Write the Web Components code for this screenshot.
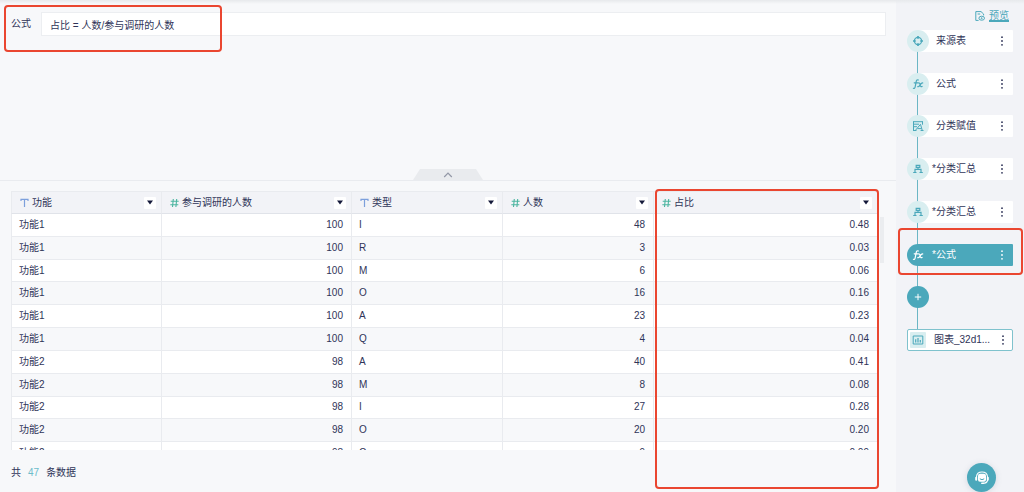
<!DOCTYPE html>
<html lang="zh-CN">
<head>
<meta charset="utf-8">
<meta name="viewport" content="width=device-width, initial-scale=1">
<title>公式</title>
<style>
  :root {
    --ink: #2f3458; --teal: #4ba8bb; --teal-soft: #d9eef0; --line: #e9ebef;
    --pane: #f7f8fa; --rail: #f2f3f7; --mark: #ea4630; --blue: #7c9fdc; --green: #4bb5a0;
  }
  body { margin: 0; color: var(--ink); font: 10px/14px "Liberation Sans", "Noto Sans CJK SC", sans-serif; }
</style>
</head>
<body>
<app-shell>
  <formula-bar slot="editor" label="公式" value="占比 = 人数/参与调研的人数"></formula-bar>
  <data-grid slot="data"></data-grid>
  <flow-rail slot="rail">
    <flow-node icon="source">来源表</flow-node>
    <flow-node icon="fx">公式</flow-node>
    <flow-node icon="assign">分类赋值</flow-node>
    <flow-node icon="tree" changed>分类汇总</flow-node>
    <flow-node icon="tree" changed>分类汇总</flow-node>
    <flow-node icon="fx" changed active>公式</flow-node>
    <flow-add></flow-add>
    <flow-node icon="chart" output>图表_32d1...</flow-node>
  </flow-rail>
</app-shell>

<script>
const define = (name, css, html) => {
  customElements.define(name, class extends HTMLElement {
    connectedCallback() {
      if (this.shadowRoot) return;
      const root = this.attachShadow({ mode: 'open' });
      root.innerHTML = `<style>*{box-sizing:border-box}button{font:inherit;color:inherit;border:0;padding:0;margin:0;background:none;cursor:pointer}svg{display:block}${css}</style>${typeof html === 'function' ? html(this) : html}`;
    }
  });
};

const ICONS = {
  source: '<svg width="12" height="12" viewBox="0 0 12 12" fill="none" stroke="currentColor"><circle cx="6" cy="6" r="3.6" stroke-width="1.2"/><path d="M6 1v2.800M6 8.200v2.800M1 6h2.800M8.200 6h2.800" stroke-width="1.700"/></svg>',
  fx: '<svg width="12" height="12" viewBox="0 0 12 12" fill="none" stroke="currentColor" stroke-linecap="round" stroke-linejoin="round" stroke-width="1.2"><path d="M6.4 2C5.2 1.5 4.5 2.1 4.3 3.2L3.1 9.2C2.9 10.2 2.2 10.7 1.4 10.3M2.2 4.8H5.8M6.2 5C7.4 4.6 7.8 5.4 8.1 6.6C8.5 8.2 8.8 9.2 10.1 8.5M10.7 4.9C9.6 4.8 8.7 6 8 7.1C7.3 8.3 6.7 9 5.7 8.7"/></svg>',
  assign: '<svg width="12" height="12" viewBox="0 0 12 12" fill="none" stroke="currentColor"><path d="M1 1.700h10M1.500 1.700v9M1.500 4.200h5.500M1.500 6.700h3.500M3.200 10.600L8.500 4.300L10.300 10.600M5.500 8.600h4M1 10.500h3.500M8.600 10.500h2.900M10.500 1.700v3"/></svg>',
  tree: '<svg width="12" height="12" viewBox="0 0 12 12" fill="none" stroke="currentColor"><path d="M4.200 2.300h3.600v2H4.200zM6 4.300v2M3 9V6.400h6V9M1.200 9.500h3.300M7.500 9.500h3.300" stroke-width="1.200"/></svg>',
  chart: '<svg width="12" height="12" viewBox="0 0 12 12" fill="none" stroke="currentColor"><path d="M1.2 2h9.6v8H1.2z"/><path d="M3.7 8.5V5.2M6 8.5V4M8.3 8.5V6" stroke-width="1.2"/></svg>'
};

define('mark-frame', `
  :host{display:block;position:absolute;z-index:3;border:2px solid var(--mark);border-radius:4px;pointer-events:none}`, '');

define('app-shell', `
  :host{display:grid;grid-template-columns:minmax(0,1fr) 128px;min-height:100vh;background:var(--pane);position:relative}
  :host::before{content:"";position:absolute;inset:0 0 auto;height:4px;background:linear-gradient(#e7e9ec,#e7e9ec00);z-index:1}
  main{display:grid;grid-template-rows:181px minmax(0,1fr);height:100vh}`, `
  <main><slot name="editor"></slot><slot name="data"></slot></main>
  <slot name="rail"></slot>`);

define('formula-bar', `
  :host{display:block;position:relative;padding:12px 10px 0 11px;border-bottom:1px solid var(--line)}
  .row{display:flex;align-items:center;gap:10px}
  label{flex:none}
  input{flex:1;min-width:0;height:24px;padding:0 8px;border:1px solid #eceef1;background:#fff;font:inherit;color:inherit;outline:0}
  .fold{position:absolute;left:50%;bottom:0;width:70px;height:11px;transform:translateX(-50%);background:#e9ebee;clip-path:polygon(10% 0,90% 0,100% 100%,0 100%);display:grid;place-items:center;color:#9297a6}
  mark-frame{left:4px;top:5px;width:218px;height:47px}`,
  el => `
  <div class="row"><label for="f">${el.getAttribute('label')}</label><input id="f" type="text" value="${el.getAttribute('value')}"></div>
  <button class="fold" aria-label="收起"><svg width="10" height="6" viewBox="0 0 10 6" fill="none" stroke="currentColor" stroke-width="1.2"><path d="M1.2 5L5 1.2L8.8 5"/></svg></button>
  <mark-frame></mark-frame>`);

define('column-head', `
  :host{display:flex;align-items:center;gap:3px}
  .name{flex:1;white-space:nowrap}
  .T{color:var(--blue)} .N{color:var(--green)}
  button{width:12px;height:12px;background:#fff;display:grid;place-items:center;color:#14193a;border-radius:1px}`,
  el => {
    const text = el.getAttribute('kind') === 'T';
    const icon = text
      ? '<svg class="T" width="9" height="10" viewBox="0 0 9 10" fill="none" stroke="currentColor" stroke-width="1.2"><path d="M1 3V1.4h7V3M4.5 1.4V9"/></svg>'
      : '<svg class="N" width="9" height="10" viewBox="0 0 9 10" fill="none" stroke="currentColor" stroke-width="1.1"><path d="M3.3 1L2.5 9M6.7 1L5.9 9M.7 3.3h8M.3 6.7h8"/></svg>';
    return `${icon}<span class="name"><slot></slot></span><button aria-label="筛选"><svg width="6" height="5" viewBox="0 0 6 5"><path d="M0 .5h6L3 4.5z" fill="currentColor"/></svg></button>`;
  });

const COLUMNS = [['T', '功能'], ['N', '参与调研的人数'], ['T', '类型'], ['N', '人数'], ['N', '占比']];
const ROWS = [
  ['功能1', 100, 'I', 48, '0.48'], ['功能1', 100, 'R', 3, '0.03'], ['功能1', 100, 'M', 6, '0.06'],
  ['功能1', 100, 'O', 16, '0.16'], ['功能1', 100, 'A', 23, '0.23'], ['功能1', 100, 'Q', 4, '0.04'],
  ['功能2', 98, 'A', 40, '0.41'], ['功能2', 98, 'M', 8, '0.08'], ['功能2', 98, 'I', 27, '0.28'],
  ['功能2', 98, 'O', 20, '0.20'], ['功能2', 98, 'C', 9, '0.09']
];

define('data-grid', `
  :host{display:flex;flex-direction:column;position:relative;min-height:0;padding:10px 18px 0 11px}
  .view{flex:1;min-height:0;overflow:hidden}
  table{width:100%;height:274px;table-layout:fixed;border-collapse:separate;border-spacing:0;border-right:1px solid var(--line)}
  th,td{padding:0 8px 0 7px;border-left:1px solid var(--line);border-bottom:1px solid var(--line);text-align:left;font-weight:400}
  th{height:23px;background:var(--rail);padding:0 5px 0 8px;border-top:1px solid var(--line);border-bottom-color:#e0e3e9}
  tbody tr:nth-child(odd){background:#fff}
  .num{text-align:right}
  .thumb{position:absolute;right:12px;top:36px;width:4px;height:46px;background:#ebedf0}
  footer{height:42px;display:flex;align-items:center;gap:7px;padding-top:3px}
  b{font-weight:400;color:#6dbccb}
  mark-frame{right:17px;top:8px;bottom:3px;width:224px}`,
  () => `
  <div class="view"><table>
    <colgroup><col style="width:150px"><col style="width:190px"><col style="width:151px"><col style="width:151px"><col></colgroup>
    <thead><tr>${COLUMNS.map(([k, n]) => `<th scope="col"><column-head kind="${k}">${n}</column-head></th>`).join('')}</tr></thead>
    <tbody>${ROWS.map(r => `<tr>${r.map((v, i) => `<td${COLUMNS[i][0] === 'N' ? ' class="num"' : ''}>${v}</td>`).join('')}</tr>`).join('')}</tbody>
  </table></div>
  <div class="thumb"></div>
  <footer><span>共</span><b>47</b><span>条数据</span></footer>
  <mark-frame></mark-frame>`);

define('flow-rail', `
  :host{display:flex;flex-direction:column;position:relative;background:var(--rail);padding:9px 11px 0}
  a{align-self:flex-end;display:flex;align-items:center;gap:4px;color:var(--teal);margin-right:4px;height:14px}
  a span{text-decoration:underline;text-underline-offset:2px}
  .list{display:flex;flex-direction:column;justify-content:space-between;height:321px;margin-top:7px;position:relative}
  .list::before{content:"";position:absolute;left:10px;top:11px;bottom:11px;width:1px;background:#6bb6c5}
  .help{position:absolute;right:28px;bottom:0;width:29px;height:29px;border-radius:50%;background:var(--teal);color:#fff;display:grid;place-items:center;box-shadow:0 1px 6px #5a64782e}`, `
  <a href="#preview"><svg width="10" height="10" viewBox="0 0 10 10" fill="none" stroke="currentColor"><path d="M3.6 9.4H.8V.6H6L8.6 3V4.4M2.6 3h2.6"/><ellipse cx="6.7" cy="7.2" rx="2.8" ry="2"/><circle cx="6.7" cy="7.2" r=".5"/></svg><span>预览</span></a>
  <div class="list"><slot></slot></div>
  <button class="help" aria-label="客服"><svg width="16" height="16" viewBox="0 0 16 16"><path d="M2.500 8V6.800C2.700 3.600 5 2 8 2s5.300 1.600 5.500 4.800V10.500C13 12.300 11.500 13.300 9 13.300" fill="none" stroke="currentColor" stroke-width="1.100"/><rect x="1.200" y="6.700" width="2" height="4" rx="1" fill="currentColor"/><rect x="12.800" y="6.700" width="2" height="4" rx="1" fill="currentColor"/><rect x="4" y="3.800" width="8" height="8" rx="2" fill="currentColor"/><path d="M5.800 8.800Q8 10.600 10.200 8.800" fill="none" stroke="#4ba8bb"/><rect x="7" y="12.500" width="3" height="1.600" rx=".8" fill="currentColor"/></svg></button>`);

define('flow-node', `
  :host{display:flex;align-items:center;position:relative;height:22px}
  .body{flex:1;min-width:0;height:22px;margin-left:11px;padding:0 8px 0 18px;background:#fff;border-radius:1px;display:flex;align-items:center}
  .icon{position:absolute;left:0;top:0;width:22px;height:22px;border-radius:50%;background:var(--teal-soft);color:var(--teal);display:grid;place-items:center}
  .name{flex:1;white-space:nowrap}
  .star{margin-left:-4px}
  .more{width:6px;height:14px;display:grid;place-items:center}
  :host([active]) .body,:host([active]) .icon{background:var(--teal);color:#fff}
  :host([output]) .body{margin-left:0;padding:0 6px 0 26px;border:1px solid #7fc2cd;border-radius:2px}
  :host([output]) .icon{left:3px;top:3px;width:16px;height:16px;border-radius:1px}
  mark-frame{inset:-16px -10px -9px -9px}`,
  el => `
  <div class="body">${el.hasAttribute('changed') ? '<span class="star">*</span>' : ''}<span class="name"><slot></slot></span>
    <button class="more" aria-label="更多"><svg width="2" height="10" viewBox="0 0 2 10" fill="currentColor"><circle cx="1" cy="1.200" r=".9"/><circle cx="1" cy="5" r=".9"/><circle cx="1" cy="8.800" r=".9"/></svg></button></div>
  <span class="icon">${ICONS[el.getAttribute('icon')]}</span>
  ${el.hasAttribute('active') ? '<mark-frame></mark-frame>' : ''}`);

define('flow-add', `
  :host{display:block;position:relative;height:22px}
  button{width:22px;height:22px;border-radius:50%;background:var(--teal);color:#fff;display:grid;place-items:center}`, `
  <button aria-label="添加"><svg width="8" height="8" viewBox="0 0 8 8" stroke="currentColor"><path d="M4 .8v6.400M.8 4h6.400"/></svg></button>`);
</script>
</body>
</html>
